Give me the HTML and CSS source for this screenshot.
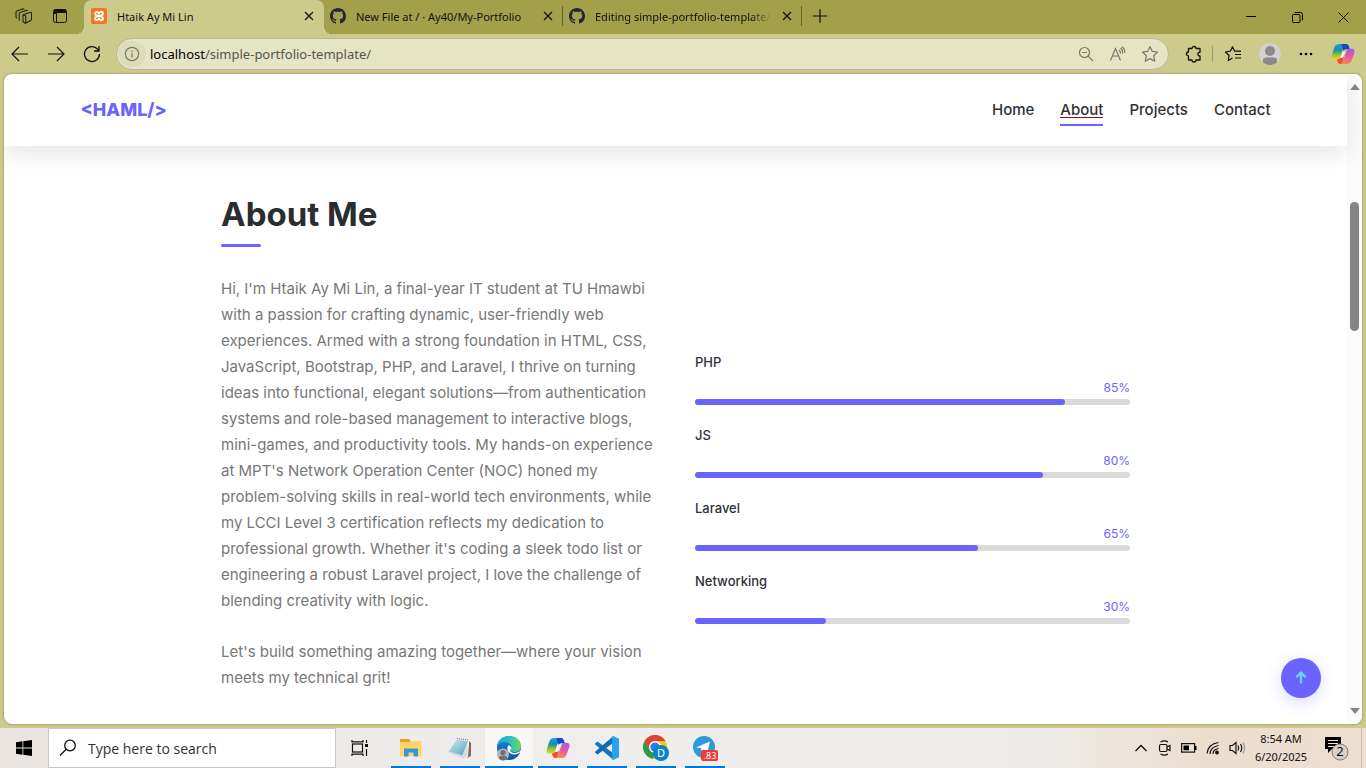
FILE: index.html
```html
<!DOCTYPE html>
<html lang="en">
<head>
<meta charset="utf-8">
<title>Htaik Ay Mi Lin</title>
<link rel="stylesheet" href="styles.css">
</head>
<body>
<svg class="defs" aria-hidden="true">
  <defs>
    <linearGradient id="cpA" x1="0" y1="0" x2="0" y2="1"><stop offset="0" stop-color="#1d9bf0"/><stop offset=".4" stop-color="#1b8f9c"/><stop offset=".7" stop-color="#8cc63f"/><stop offset="1" stop-color="#ffd21a"/></linearGradient>
    <linearGradient id="cpB" x1=".6" y1="0" x2=".4" y2="1"><stop offset="0" stop-color="#a05cf0"/><stop offset=".5" stop-color="#e85aa0"/><stop offset="1" stop-color="#ff8a4c"/></linearGradient>
    <linearGradient id="edA" x1="0" y1="0" x2="1" y2="0"><stop offset="0" stop-color="#1ea4e0"/><stop offset=".5" stop-color="#28bfc8"/><stop offset="1" stop-color="#6ddb52"/></linearGradient>
    <linearGradient id="edB" x1="0" y1="0" x2="0" y2="1"><stop offset="0" stop-color="#1b8bd8"/><stop offset="1" stop-color="#0b53a5"/></linearGradient>
    <linearGradient id="npA" x1="0" y1="0" x2="1" y2="1"><stop offset="0" stop-color="#d6eef3"/><stop offset="1" stop-color="#4ba3b8"/></linearGradient>
    <symbol id="github" viewBox="0 0 16 16"><path fill="#25292e" d="M8 0C3.58 0 0 3.58 0 8c0 3.54 2.29 6.53 5.47 7.59.4.07.55-.17.55-.38 0-.19-.01-.82-.01-1.49-2.01.37-2.53-.49-2.69-.94-.09-.23-.48-.94-.82-1.13-.28-.15-.68-.52-.01-.53.63-.01 1.08.58 1.23.82.72 1.21 1.87.87 2.33.66.07-.52.28-.87.51-1.07-1.78-.2-3.64-.89-3.64-3.95 0-.87.31-1.59.82-2.15-.08-.2-.36-1.02.08-2.12 0 0 .67-.21 2.2.82.64-.18 1.32-.27 2-.27s1.36.09 2 .27c1.53-1.04 2.2-.82 2.2-.82.44 1.1.16 1.92.08 2.12.51.56.82 1.27.82 2.15 0 3.07-1.87 3.75-3.65 3.95.29.25.54.73.54 1.48 0 1.07-.01 1.93-.01 2.2 0 .21.15.46.55.38A8.01 8.01 0 0 0 16 8c0-4.42-3.58-8-8-8z"/></symbol>
    <symbol id="cross" viewBox="0 0 10 10"><path d="M1 1l8 8M9 1L1 9" fill="none" stroke="#111" stroke-width="1.3"/></symbol>
    <symbol id="copilot" viewBox="0 0 24 22">
      <path fill="url(#cpA)" d="M8 1h7.500c-1.500 0-2.300 1-2.800 2.500L9 14c-.6 1.500-1.500 2.500-3.500 2.500H3.500C.8 16.500.2 14.500.8 12L3.600 4C4.500 1.800 6 1 8 1z"/>
      <path fill="#1747c4" d="M11 1h4c1.500 0 2.500.8 3 2.500l.8 2.700h-3c-1.800 0-2.900.6-3.500 1.800L10.500 1.500z"/>
      <path fill="#f2502f" d="M11.500 21h-2c-1.500 0-2.500-.8-3-2.500l-.7-2c2 0 3-1 3.500-2.500h3.500z"/>
      <path fill="url(#cpB)" d="M16 21H9.500c1 0 1.800-1 2.300-2.500L15.500 8c.5-1.300 1.500-2.200 3.200-2.200h1.700c2.800 0 3.500 2 2.900 4.200l-2.900 8c-.8 2-2.400 3-4.400 3z"/>
      <path fill="#fff" fill-opacity=".9" d="M12.500 8.500h1.700L11.500 15H9z"/>
    </symbol>
  </defs>
</svg>

<header class="titlebar">
  <button class="tb-btn" aria-label="Workspaces"><svg width="18" height="18" viewBox="0 0 18 18" fill="none" stroke="#222" stroke-width="1.100" stroke-linejoin="round"><path d="M8 8.500q0-.8.800-1.100l6-2q1.500-.5 1.700.8v6q0 .8-.8 1.200l-4.700 2.700q-.6.300-1.200-.1l-1.300-1q-.5-.4-.5-1zM8.200 8l2.600 1.100v7M4.800 13.500q-.6-.4-.6-1.200V6.700q0-.9.800-1.200L11 3.500q1.200-.4 1.600.6M1.800 11.200q-.8-.5-.8-1.400V5.200q0-.9.800-1.200l5.700-2q1.200-.4 1.700.6"/></svg></button>
  <button class="tb-btn" aria-label="Tab actions"><svg width="16" height="16" viewBox="0 0 16 16"><rect x="1.500" y="1.500" width="13" height="13" rx="2" fill="none" stroke="#111"/><path d="M2 1.500h12v3.500H2zM2 5h2v1H2z" fill="#111"/><path d="M4.500 5v9" stroke="#111"/></svg></button>
  <div class="tab tab-active">
    <svg width="16" height="16" viewBox="0 0 16 16"><rect width="16" height="16" rx="2" fill="#f37623"/><path d="M4.800 4.300a1.600 1.600 0 0 1 2.200 0L8 5.500l1-1.200a1.700 1.700 0 1 1 2.400 2.400L10.200 8l1.200 1.300A1.700 1.700 0 1 1 9 11.700L8 10.500l-1 1.200a1.700 1.700 0 1 1-2.400-2.400L5.800 8 4.600 6.700a1.600 1.600 0 0 1 .2-2.400zM6 8h4" fill="none" stroke="#fff" stroke-width="1.900"/></svg>
    <span class="tab-title">Htaik Ay Mi Lin</span>
    <button class="tab-x" aria-label="Close tab"><svg width="10" height="10"><use href="#cross"/></svg></button>
  </div>
  <div class="tab tab-line">
    <svg width="16" height="16"><use href="#github"/></svg>
    <span class="tab-title">New File at / · Ay40/My-Portfolio</span>
    <button class="tab-x" aria-label="Close tab"><svg width="10" height="10"><use href="#cross"/></svg></button>
  </div>
  <div class="tab tab-line">
    <svg width="16" height="16"><use href="#github"/></svg>
    <span class="tab-title tab-fade">Editing simple-portfolio-template/</span>
    <button class="tab-x" aria-label="Close tab"><svg width="10" height="10"><use href="#cross"/></svg></button>
  </div>
  <button class="tb-btn" aria-label="New tab"><svg width="14" height="14" viewBox="0 0 14 14"><path d="M7 0v14M0 7h14" stroke="#111" stroke-width="1.200"/></svg></button>
  <div class="win">
    <button aria-label="Minimize"><svg width="10" height="10" viewBox="0 0 10 10"><path d="M0 4.500h10" stroke="#000"/></svg></button>
    <button aria-label="Restore"><svg width="11" height="11" viewBox="0 0 11 11" fill="none" stroke="#000"><rect x=".5" y="2.500" width="7.500" height="8" rx="1"/><path d="M2.500 .5h6q2 0 2 2v6"/></svg></button>
    <button aria-label="Close"><svg width="11" height="11" viewBox="0 0 11 11"><path d="M.5.5l10 10M10.500.5l-10 10" stroke="#000"/></svg></button>
  </div>
</header>

<div class="toolbar">
  <button class="nav-btn" aria-label="Back"><svg width="18" height="16" viewBox="0 0 18 16" fill="none" stroke="#111" stroke-width="1.200"><path d="M17 8H1.500M8 1L1 8l7 7"/></svg></button>
  <button class="nav-btn" aria-label="Forward"><svg width="18" height="16" viewBox="0 0 18 16" fill="none" stroke="#111" stroke-width="1.200"><path d="M1 8h15.500M10 1l7 7-7 7"/></svg></button>
  <button class="nav-btn" aria-label="Refresh"><svg width="18" height="18" viewBox="0 0 18 18" fill="none" stroke="#111" stroke-width="1.300"><path d="M16.500 9A7.500 7.500 0 1 1 14.800 4.300L16 5.800M16 1v5h-5"/></svg></button>
  <div class="address">
    <button class="info" aria-label="Site information"><svg width="16" height="16" viewBox="0 0 16 16" fill="none" stroke="#77776c" stroke-width="1.200"><circle cx="8" cy="8" r="6.700"/><path d="M8 7v4.500M8 4.500V6"/></svg></button>
    <div class="url"><b>localhost</b>/simple-portfolio-template/</div>
    <button aria-label="Zoom out"><svg width="16" height="16" viewBox="0 0 16 16" fill="none" stroke="#77776c" stroke-width="1.200"><circle cx="6.500" cy="6.500" r="5"/><path d="M4 6.500h5M10.200 10.200L15 15"/></svg></button>
    <button aria-label="Read aloud"><svg width="18" height="16" viewBox="0 0 18 16" fill="none" stroke="#77776c" stroke-width="1.200"><path d="M1.500 14.500L6.500 2.500l5 12M3.500 10h6.500M10 4q1.500 1 1.500 3.500M11.500 2Q14 4 13.500 7.500M13 .8q3.300 2.500 2.700 6.200"/></svg></button>
    <button aria-label="Add to favourites"><svg width="18" height="18" viewBox="0 0 18 18" fill="none" stroke="#77776c" stroke-width="1.200" stroke-linejoin="round"><path d="M9 1.500l2.300 4.900 5.300.7-3.900 3.700 1 5.400L9 13.600l-4.700 2.600 1-5.400L1.400 7.100l5.300-.7z"/></svg></button>
  </div>
  <button class="ext" aria-label="Extensions"><svg width="18" height="18" viewBox="0 0 18 18" fill="none" stroke="#111" stroke-width="1.300" stroke-linejoin="round"><path d="M7 3.500a2 2 0 0 1 4 0h4v3.800a1.800 1.800 0 1 0 0 3.500v4.200h-4a2 2 0 0 1-4 0H3.500V11a2 2 0 1 1 0-4V3.500z"/></svg></button>
  <span class="sep"></span>
  <button class="fav" aria-label="Favourites"><svg width="18" height="18" viewBox="0 0 18 18" fill="none" stroke="#111" stroke-width="1.200" stroke-linejoin="round"><path d="M8.500 13l-4.200 2.500.8-5L1.500 7l4.800-.8L8.500 1.700l2.200 4.500H17M11 9.500h6M11 13h6"/></svg></button>
  <button class="nav-btn" aria-label="Profile"><svg width="22" height="22" viewBox="0 0 22 22"><circle cx="11" cy="11" r="11" fill="#d3d1d0"/><circle cx="11" cy="8" r="5" fill="#8c8988"/><path d="M4 19.500V17q0-2.500 3-2.500h8q3 0 3 2.500v2.500a11 11 0 0 1-14 0z" fill="#8c8988"/></svg></button>
  <button class="nav-btn" aria-label="Settings and more"><svg width="14" height="4" viewBox="0 0 14 4"><circle cx="2" cy="2" r="1.300"/><circle cx="7" cy="2" r="1.300"/><circle cx="12" cy="2" r="1.300"/></svg></button>
  <button class="cop" aria-label="Copilot"><svg width="24" height="22"><use href="#copilot"/></svg></button>
</div>

<div class="frame">
  <div class="page">
    <header class="site-head">
      <div class="site-bar">
        <a class="logo" href="#">&lt;HAML/&gt;</a>
        <nav class="site-nav">
          <a href="#home">Home</a>
          <a class="current" href="#about">About</a>
          <a href="#projects">Projects</a>
          <a href="#contact">Contact</a>
        </nav>
      </div>
    </header>
    <main class="about" id="about">
      <h2>About Me</h2>
      <div class="cols">
        <div class="bio">
          <p>Hi, I'm Htaik Ay Mi Lin, a final-year IT student at TU Hmawbi<br>with a passion for crafting dynamic, user-friendly web<br>experiences. Armed with a strong foundation in HTML, CSS,<br>JavaScript, Bootstrap, PHP, and Laravel, I thrive on turning<br>ideas into functional, elegant solutions—from authentication<br>systems and role-based management to interactive blogs,<br>mini-games, and productivity tools. My hands-on experience<br>at MPT's Network Operation Center (NOC) honed my<br>problem-solving skills in real-world tech environments, while<br>my LCCI Level 3 certification reflects my dedication to<br>professional growth. Whether it's coding a sleek todo list or<br>engineering a robust Laravel project, I love the challenge of<br>blending creativity with logic.</p>
          <p>Let's build something amazing together—where your vision<br>meets my technical grit!</p>
        </div>
        <div class="skills">
          <div class="skill"><span class="name">PHP</span><span class="pct">85%</span><div class="bar"><div class="fill" style="width:85%"></div></div></div>
          <div class="skill"><span class="name">JS</span><span class="pct">80%</span><div class="bar"><div class="fill" style="width:80%"></div></div></div>
          <div class="skill"><span class="name">Laravel</span><span class="pct">65%</span><div class="bar"><div class="fill" style="width:65%"></div></div></div>
          <div class="skill"><span class="name">Networking</span><span class="pct">30%</span><div class="bar"><div class="fill" style="width:30%"></div></div></div>
        </div>
      </div>
    </main>
    <a class="to-top" href="#" aria-label="Back to top"><svg width="12" height="14" viewBox="0 0 12 14" fill="none" stroke="#5fd9dc" stroke-width="2.400" stroke-linecap="round" stroke-linejoin="round"><path d="M6 11.500V2M2 5.500L6 1.500l4 4"/></svg></a>
  </div>
  <div class="scroll">
    <svg width="10" height="6" viewBox="0 0 10 6"><path d="M5 0l5 6H0z" fill="#858585"/></svg>
    <div class="track"><div class="thumb"></div></div>
    <svg width="10" height="6" viewBox="0 0 10 6"><path d="M0 0h10L5 6z" fill="#858585"/></svg>
  </div>
</div>

<footer class="taskbar">
  <button class="task" aria-label="Start"><svg width="16" height="16" viewBox="0 0 16 16"><path d="M0 2.200L6.500 1.300v6.300H0zM7.300 1.200L16 0v7.600H7.300zM0 8.400h6.500v6.300L0 13.800zM7.300 8.400H16V16l-8.700-1.200z"/></svg></button>
  <label class="search">
    <svg width="18" height="18" viewBox="0 0 18 18" fill="none" stroke="#111" stroke-width="1.300"><circle cx="11" cy="6.500" r="5.300"/><path d="M7.200 10.300L1 16.500"/></svg>
    <input type="text" placeholder="Type here to search" aria-label="Type here to search">
  </label>
  <button class="task" aria-label="Task view"><svg width="18" height="16" viewBox="0 0 18 16" fill="none" stroke="#111" stroke-width="1.200"><rect x="1.500" y="4" width="10" height="8"/><path d="M1 0v1.800h11V0M1 16v-1.800h11V16M15.500 0v3M15.500 9v7"/><path d="M14 4h3v3h-3z" fill="#111" stroke="none"/></svg></button>
  <div class="apps">
    <button class="app" aria-label="File Explorer"><svg width="22" height="20" viewBox="0 0 22 20"><path d="M0 1h9l1.500 2H21v4H0z" fill="#e6a117"/><path d="M0 4h9l2-1h10.500v15H0z" fill="#ffd666"/><path d="M4 18.500v-8h14v8h-4.500v-4h-5v4z" fill="#3b94dc"/></svg></button>
    <button class="app" aria-label="Notepad"><svg width="24" height="24" viewBox="0 0 24 24"><path d="M20 4l3 3v13l-4 2z" fill="#826a54"/><path d="M9 2l12 1.500V8l-1 13-4 1z" fill="#f4f4f4"/><path d="M9 3.500l11 1.500L14.500 19.500.5 15.500z" fill="url(#npA)"/><path d="M.5 15.500l14 4L19.500 8v12l-3.500 2.500L.5 17z" fill="#d6dadc"/><path d="M9 2.500l12 1.500" stroke="#666" stroke-dasharray="1 1"/></svg></button>
    <button class="app app-on" aria-label="Microsoft Edge"><svg width="26" height="26" viewBox="0 0 26 26"><circle cx="13" cy="13" r="12" fill="url(#edB)"/><path d="M1 11C2 4.500 7 1 13 1c7 0 12 4.500 12 10 0 4-3 6-6.500 6-3 0-4.500-1-4.500-2s1.300-1.400 1.300-3.300C15.300 9 12 7 8.500 7 5 7 2.500 8.500 1 11z" fill="url(#edA)"/><path d="M25 16.500c-2 2.200-4.700 3-7.300 2.900-4-.3-6.500-3-6.300-6.400.1-1 .5-2 1.200-2.700 2 .5 2.700 1.800 2.700 3 0 1-1.300 1.300-1.300 2.300s1.500 2.400 4.500 2.400c2.700 0 4.700-.8 6.200-3z" fill="#fff"/><circle cx="7" cy="19.500" r="6" fill="#b7b6b5"/><circle cx="7" cy="17.500" r="2.600" fill="#72706f"/><path d="M2.800 23.500q0-3 4.200-3t4.200 3q-4 4-8.400 0z" fill="#72706f"/></svg></button>
    <button class="app" aria-label="Copilot"><svg width="24" height="22"><use href="#copilot"/></svg></button>
    <button class="app" aria-label="Visual Studio Code"><svg width="24" height="24" viewBox="0 0 24 24"><path d="M0 7.500L2.500 5.500 18 17v6.500L.3 8.500z" fill="#0f77bf"/><path d="M0 16.500l2.500 2L18 7V.5L.3 15.500z" fill="#0e6bb0"/><path d="M18 0l6 2.800v18.400L18 24l-1-.6V.6z" fill="#27a2ee"/></svg></button>
    <button class="app" aria-label="Google Chrome"><svg width="26" height="26" viewBox="0 0 26 26"><circle cx="12" cy="12" r="12" fill="#f9c515"/><path d="M1.600 6A12 12 0 0 1 22.400 6H12L6.800 15z" fill="#dd4237"/><path d="M1.600 6l5.200 9L12 18l-2 5.800A12 12 0 0 1 1.600 6z" fill="#2b9a4b"/><circle cx="12" cy="12" r="6" fill="#fff"/><circle cx="12" cy="12" r="4.600" fill="#3479e8"/><circle cx="18" cy="18" r="8" fill="#0785c4"/><text x="18" y="22" text-anchor="middle" class="badge-text">D</text></svg></button>
    <button class="app" aria-label="Telegram"><svg width="26" height="26" viewBox="0 0 26 26"><circle cx="12" cy="12" r="11" fill="#2a9dd8"/><path d="M4 12.500L18 6.500 15.500 17l-4-2.500-2 2L9 13z" fill="#fff"/><rect x="9" y="15" width="17" height="11" rx="2" fill="#f03a37"/><text x="18" y="24" text-anchor="middle" class="badge-small">.83</text></svg></button>
  </div>
  <div class="tray">
    <button aria-label="Show hidden icons"><svg width="12" height="8" viewBox="0 0 12 8"><path d="M.5 7L6 1.500 11.500 7" fill="none" stroke="#111" stroke-width="1.300"/></svg></button>
    <button aria-label="Meet now"><svg width="14" height="16" viewBox="0 0 14 16" fill="none" stroke="#111" stroke-width="1.200"><rect x="1.500" y="4.500" width="7.500" height="7" rx="1.500"/><path d="M9 7l3-1.500v5L9 9M2.500 2q4-2.300 7.500 0M2.500 14q4 2.300 7.500 0"/></svg></button>
    <button aria-label="Battery"><svg width="16" height="10" viewBox="0 0 16 10"><rect x=".6" y=".6" width="13" height="8.500" fill="none" stroke="#111" stroke-width="1.200"/><path d="M2.500 2.500H8v4.700H2.500zM14 3h1.500v4H14z"/></svg></button>
    <button aria-label="Wi-Fi"><svg width="14" height="14" viewBox="0 0 14 14" fill="none" stroke="#111" stroke-width="1.200"><path d="M1 12.500Q2 3 12.500 1.500M4 13Q4.500 6 12.500 4.500M7 13q0-4.500 5.500-5.500"/><circle cx="11" cy="11.500" r="1.300" fill="#111"/></svg></button>
    <button aria-label="Volume"><svg width="17" height="14" viewBox="0 0 17 14" fill="none" stroke="#111" stroke-width="1.200"><path d="M1 4.500h2.500L7 1.500v11L3.500 9.500H1zM9 4.500q1.500 2.500 0 5M11.500 3q2.500 4 0 8"/><path d="M14 1.500q3.200 5.500 0 11" stroke="#999"/></svg></button>
    <div class="clock"><span>8:54 AM</span><span>6/20/2025</span></div>
    <button class="note" aria-label="2 notifications"><svg width="26" height="26" viewBox="0 0 26 26"><path d="M1 2h16v12H8l-4 4v-4H1z"/><path d="M4 5.500h10M4 8.500h10M4 11.500h7" stroke="#eee3d8"/><circle cx="16" cy="17" r="8" fill="#d5d0cb" stroke="#84807c"/><text x="16" y="21" text-anchor="middle" class="note-text">2</text></svg></button>
    <span class="peek"></span>
  </div>
</footer>
</body>
</html>
```
FILE: styles.css
```css
* { box-sizing: border-box; }
html, body { height: 100%; }
body {
  margin: 0;
  display: flex;
  flex-direction: column;
  overflow: hidden;
  background: #cccb8c;
  font-family: "Noto Sans", sans-serif;
  font-size: 12px;
  color: #111;
}
button {
  border: 0;
  padding: 0;
  background: none;
  color: inherit;
  font: inherit;
  display: flex;
  align-items: center;
  justify-content: center;
  flex: none;
}
a { color: inherit; text-decoration: none; }
svg { display: block; flex: none; }
.defs { position: absolute; width: 0; height: 0; }

.titlebar {
  display: flex;
  flex: none;
  height: 34px;
  padding-left: 6px;
  background: #a3a04a;
}
.tb-btn { width: 36px; height: 32px; }
.titlebar > .tb-btn + .tab { margin-left: 6px; }
.tab {
  display: flex;
  align-items: center;
  flex: 0 1 239px;
  min-width: 0;
  height: 32px;
  padding: 0 10px 0 6px;
  gap: 10px;
}
.tab-active {
  position: relative;
  flex-basis: 240px;
  height: 34px;
  padding: 0 10px 2px 7px;
  background: #cccb8c;
  border-radius: 8px 8px 0 0;
}
.tab-active::before,
.tab-active::after {
  content: "";
  position: absolute;
  bottom: 0;
  width: 8px;
  height: 8px;
}
.tab-active::before { left: -8px; background: radial-gradient(circle at 0 0, #a3a04a 8px, #cccb8c 8px); }
.tab-active::after { right: -8px; background: radial-gradient(circle at 100% 0, #a3a04a 8px, #cccb8c 8px); }
.tab-line { background: linear-gradient(#66632f, #66632f) right center / 1px 20px no-repeat; }
.tab-title {
  flex: 1;
  min-width: 0;
  overflow: hidden;
  white-space: nowrap;
  font-size: 11px;
}
.tab-fade { mask-image: linear-gradient(to right, #000 88%, transparent); }
.win { display: flex; margin-left: auto; }
.win button { width: 46px; height: 34px; }

.toolbar {
  display: flex;
  align-items: center;
  flex: none;
  height: 40px;
  padding: 0 4px 0 2px;
}
.nav-btn { width: 36px; height: 32px; }
.address {
  display: flex;
  align-items: center;
  flex: 1;
  height: 32px;
  margin: 0 6px;
  padding: 0 2px 0 1px;
  border: 1px solid #bab991;
  border-radius: 16px;
  background: #e5e5c5;
}
.address button { width: 32px; height: 26px; }
.address .info { width: 28px; height: 26px; border-radius: 13px; background: #dcdcbb; }
.url { flex: 1; padding-left: 4px; font-size: 13px; color: #55554c; }
.url b { font-weight: 400; color: #000; }
.ext { width: 37px; }
.sep { width: 1px; height: 16px; background: #9c9b68; }
.fav { width: 39px; }
.cop { width: 38px; }

.frame {
  display: flex;
  flex: 1;
  min-height: 0;
  margin: 0 4px 4px;
  border-radius: 8px;
  overflow: hidden;
  background: #fff;
  box-shadow: 0 0 3px #8a894f;
}
.page {
  position: relative;
  flex: 1;
  min-width: 0;
  font-family: Inter, "Noto Sans", sans-serif;
}
.site-head { padding: 0 16px; box-shadow: 0 8px 24px #0000001a; }
.site-bar {
  display: flex;
  align-items: center;
  justify-content: space-between;
  max-width: 1190px;
  height: 72px;
  margin: 0 auto;
  padding-bottom: 2px;
}
.logo { font-size: 18px; font-weight: 800; color: #6c63ff; }
.site-nav { display: flex; gap: 26px; font-size: 15px; font-weight: 500; color: #313237; }
.current { position: relative; }
.current::after {
  content: "";
  position: absolute;
  left: 0;
  right: 0;
  bottom: -7px;
  height: 6px;
  border-top: 1px solid #8b1020;
  border-bottom: 2px solid #6c63ff;
}
.about { max-width: 909px; margin: 0 auto; padding-top: 44px; }
.about h2 {
  margin: 0 0 29px;
  font-size: 33px;
  line-height: 48px;
  color: #2b2c31;
}
.about h2::after {
  content: "";
  display: block;
  width: 40px;
  height: 3px;
  margin-top: 6px;
  border-radius: 2px;
  background: #6c63ff;
}
.cols { display: grid; grid-template-columns: 1fr 1fr; gap: 39px; }
.bio p {
  margin: 0 0 25px;
  font-size: 15px;
  line-height: 26px;
  color: #777;
  white-space: nowrap;
}
.skills { padding-top: 76px; }
.skill { display: flex; flex-direction: column; margin-bottom: 21px; font-size: 13px; line-height: 20px; }
.name { font-weight: 500; color: #2f3138; }
.pct { margin-top: 6px; text-align: right; font-size: 12px; color: #6c63ff; }
.bar { height: 6px; margin-bottom: -1px; border-radius: 3px; background: #dadada; }
.skill .bar { margin-top: 1px; margin-bottom: -1px; }
.fill { height: 100%; border-radius: 3px; background: #6c63ff; }
.to-top {
  position: absolute;
  right: 26px;
  bottom: 26px;
  display: flex;
  align-items: center;
  justify-content: center;
  width: 40px;
  height: 40px;
  border-radius: 50%;
  background: #6c63ff;
  box-shadow: 0 4px 16px #6c63ff40;
}
.scroll {
  display: flex;
  flex-direction: column;
  align-items: center;
  width: 15px;
  padding: 10px 0;
  background: #fbfbfb;
}
.track { flex: 1; padding-top: 112px; }
.thumb { width: 9px; height: 129px; border-radius: 5px; background: #858585; }

.taskbar {
  display: flex;
  flex: none;
  height: 40px;
  background: linear-gradient(to right, #e9e4df, #efeeed 40%, #eeecea 75%, #ebded1 88%, #ecded0);
}
.task { width: 48px; height: 40px; }
.search {
  display: flex;
  align-items: center;
  flex: 0 1 288px;
  padding-left: 10px;
  gap: 11px;
  border: 1px solid #c8c8ca;
  background: #fff;
}
.search input {
  flex: 1;
  min-width: 0;
  padding: 0;
  border: 0;
  outline: 0;
  background: none;
  font: 14px "Open Sans", "Noto Sans", sans-serif;
}
.search input::placeholder { color: #333; opacity: 1; }
.apps { display: flex; gap: 1px; margin-left: 3px; }
.app {
  width: 48px;
  height: 40px;
  background: linear-gradient(#0078d7, #0078d7) center bottom / 40px 2px no-repeat;
}
.app-on {
  background: linear-gradient(#0078d7, #0078d7) center bottom / 48px 2px no-repeat, #f8f7f6;
}
.badge-text { font-size: 11px; fill: #fff; }
.badge-small { font-size: 9px; fill: #fff; }
.note-text { font-size: 13px; fill: #111; }
.tray { display: flex; align-items: center; margin-left: auto; }
.tray button { width: 24px; height: 40px; }
.clock {
  display: flex;
  flex-direction: column;
  align-items: center;
  width: 64px;
  font-size: 11px;
  line-height: 18px;
}
.tray .note { width: 48px; }
.peek { width: 5px; height: 40px; border-left: 1px solid #cbbfb4; }
```
